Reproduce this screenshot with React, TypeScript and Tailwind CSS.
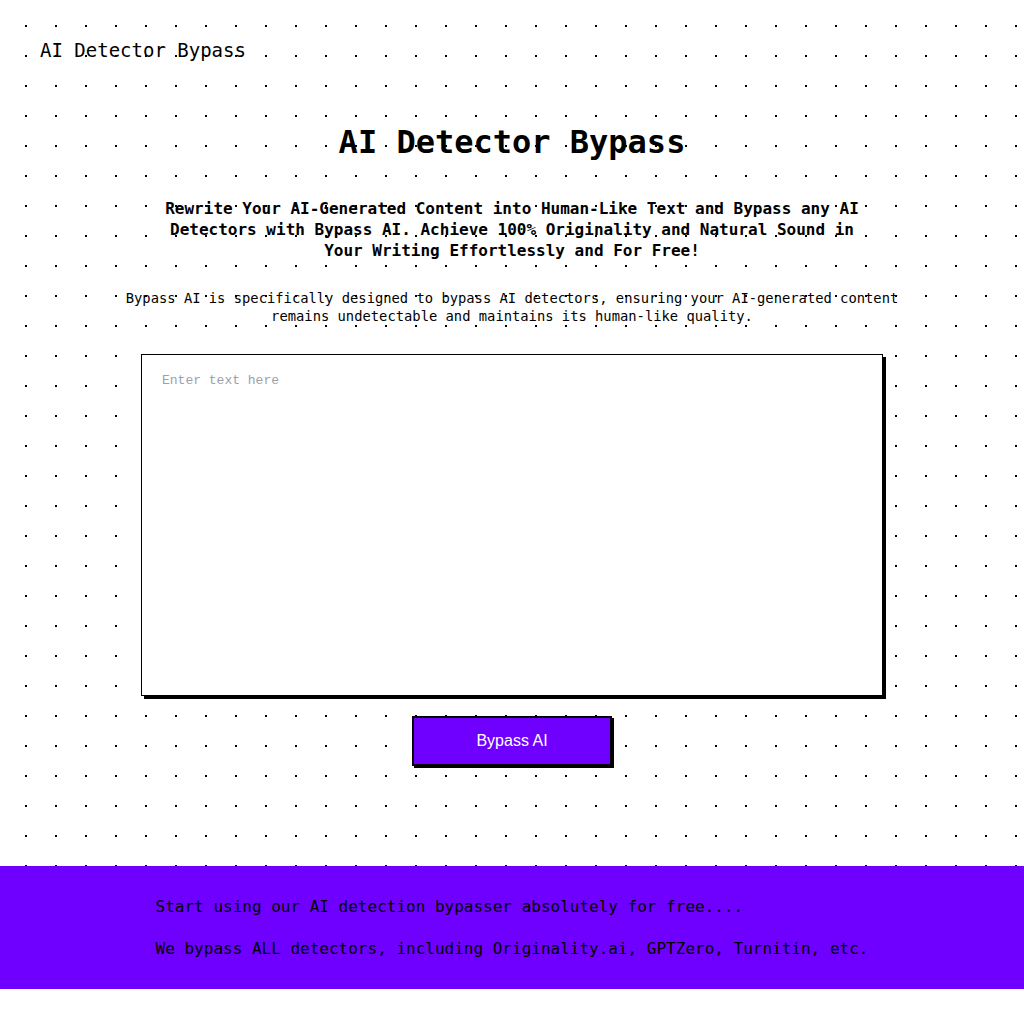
import React from 'react';

const mono = "font-['DejaVu_Sans_Mono',monospace]";

const App: React.FC = () => {
  return (
    <div className="bg-white min-h-screen">
      {/* Hero with dotted background */}
      <section className="h-[866px] bg-white bg-[radial-gradient(circle,#000_1px,transparent_1.5px)] bg-[size:30px_30px] bg-[position:11px_11px]">
        <header className="px-10 pt-[36px]">
          <span className={`${mono} text-[19px] leading-[28px] text-black`}>AI Detector Bypass</span>
        </header>

        <div className="flex flex-col items-center">
          <h1 className={`${mono} mt-[58px] text-[32px] leading-[40px] font-bold text-black`}>
            AI Detector Bypass
          </h1>

          <p className={`${mono} mt-[36px] max-w-[710px] text-center text-[16px] leading-[21px] font-bold text-black`}>
            Rewrite Your AI-Generated Content into Human-Like Text and Bypass any AI Detectors with Bypass AI. Achieve 100% Originality and Natural Sound in Your Writing Effortlessly and For Free!
          </p>

          <p className={`${mono} mt-[28px] max-w-[800px] text-center text-[13.8px] leading-[18px] text-black`}>
            Bypass AI is specifically designed to bypass AI detectors, ensuring your AI-generated content remains undetectable and maintains its human-like quality.
          </p>

          <textarea
            placeholder="Enter text here"
            className="mt-[29px] w-[742px] h-[342px] resize-none border border-black bg-white px-5 py-[17px] font-['Liberation_Mono',monospace] text-[13px] leading-[18px] text-black placeholder:text-gray-400 shadow-[3px_3px_0_#000] outline-none"
          />

          <button className="mt-[20px] w-[200px] h-[50px] border-2 border-black bg-[#6f00ff] font-['Liberation_Sans',Arial,sans-serif] text-[16px] text-white shadow-[2px_2px_0_#000]">
            Bypass AI
          </button>
        </div>
      </section>

      {/* Footer */}
      <footer className="bg-[#6f00ff] pt-[29px] pb-[28px]">
        <div className={`${mono} mx-auto w-fit flex flex-col gap-[18px] text-[16px] leading-[24px] text-black`}>
          <p>Start using our AI detection bypasser absolutely for free....</p>
          <p>We bypass ALL detectors, including Originality.ai, GPTZero, Turnitin, etc.</p>
        </div>
      </footer>
    </div>
  );
};

export default App;
